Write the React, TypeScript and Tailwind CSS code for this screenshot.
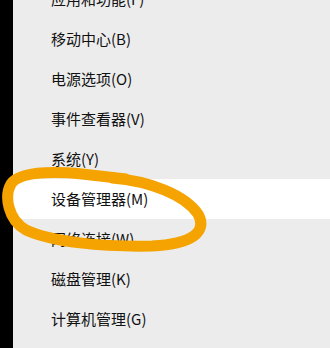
const items = [
  { label: '应用和功能(F)' },
  { label: '移动中心(B)' },
  { label: '电源选项(O)' },
  { label: '事件查看器(V)' },
  { label: '系统(Y)' },
  { label: '设备管理器(M)', active: true },
  { label: '网络连接(W)' },
  { label: '磁盘管理(K)' },
  { label: '计算机管理(G)' },
]

export default function App() {
  return (
    <div
      className="relative flex h-[348px] w-[330px] overflow-hidden bg-[#ececec]"
      style={{ fontFamily: '"Noto Sans CJK SC", "Noto Sans", sans-serif' }}
    >
      {/* left edge of the screen */}
      <div className="w-[13px] shrink-0 bg-black" />

      {/* menu */}
      <div className="-mt-[21px] flex flex-1 flex-col">
        {items.map((it) => (
          <div
            key={it.label}
            className={`flex h-10 shrink-0 items-center pl-[38px] text-[15px] text-[#111] ${
              it.active ? 'bg-white' : ''
            }`}
          >
            {it.label}
          </div>
        ))}
      </div>

      {/* hand-drawn highlight */}
      <svg className="pointer-events-none absolute inset-0" width="330" height="348" viewBox="0 0 330 348">
        <path
          d="M112 178 C150 181, 185 195, 198 214 C208 232, 192 244, 152 246 C102 247, 52 242, 26 230 C8 220, 4 196, 11 184 C19 172, 50 171, 82 174 L126 179"
          fill="none"
          stroke="#f5a300"
          strokeWidth="11"
          strokeLinecap="round"
          strokeLinejoin="round"
        />
      </svg>
    </div>
  )
}
